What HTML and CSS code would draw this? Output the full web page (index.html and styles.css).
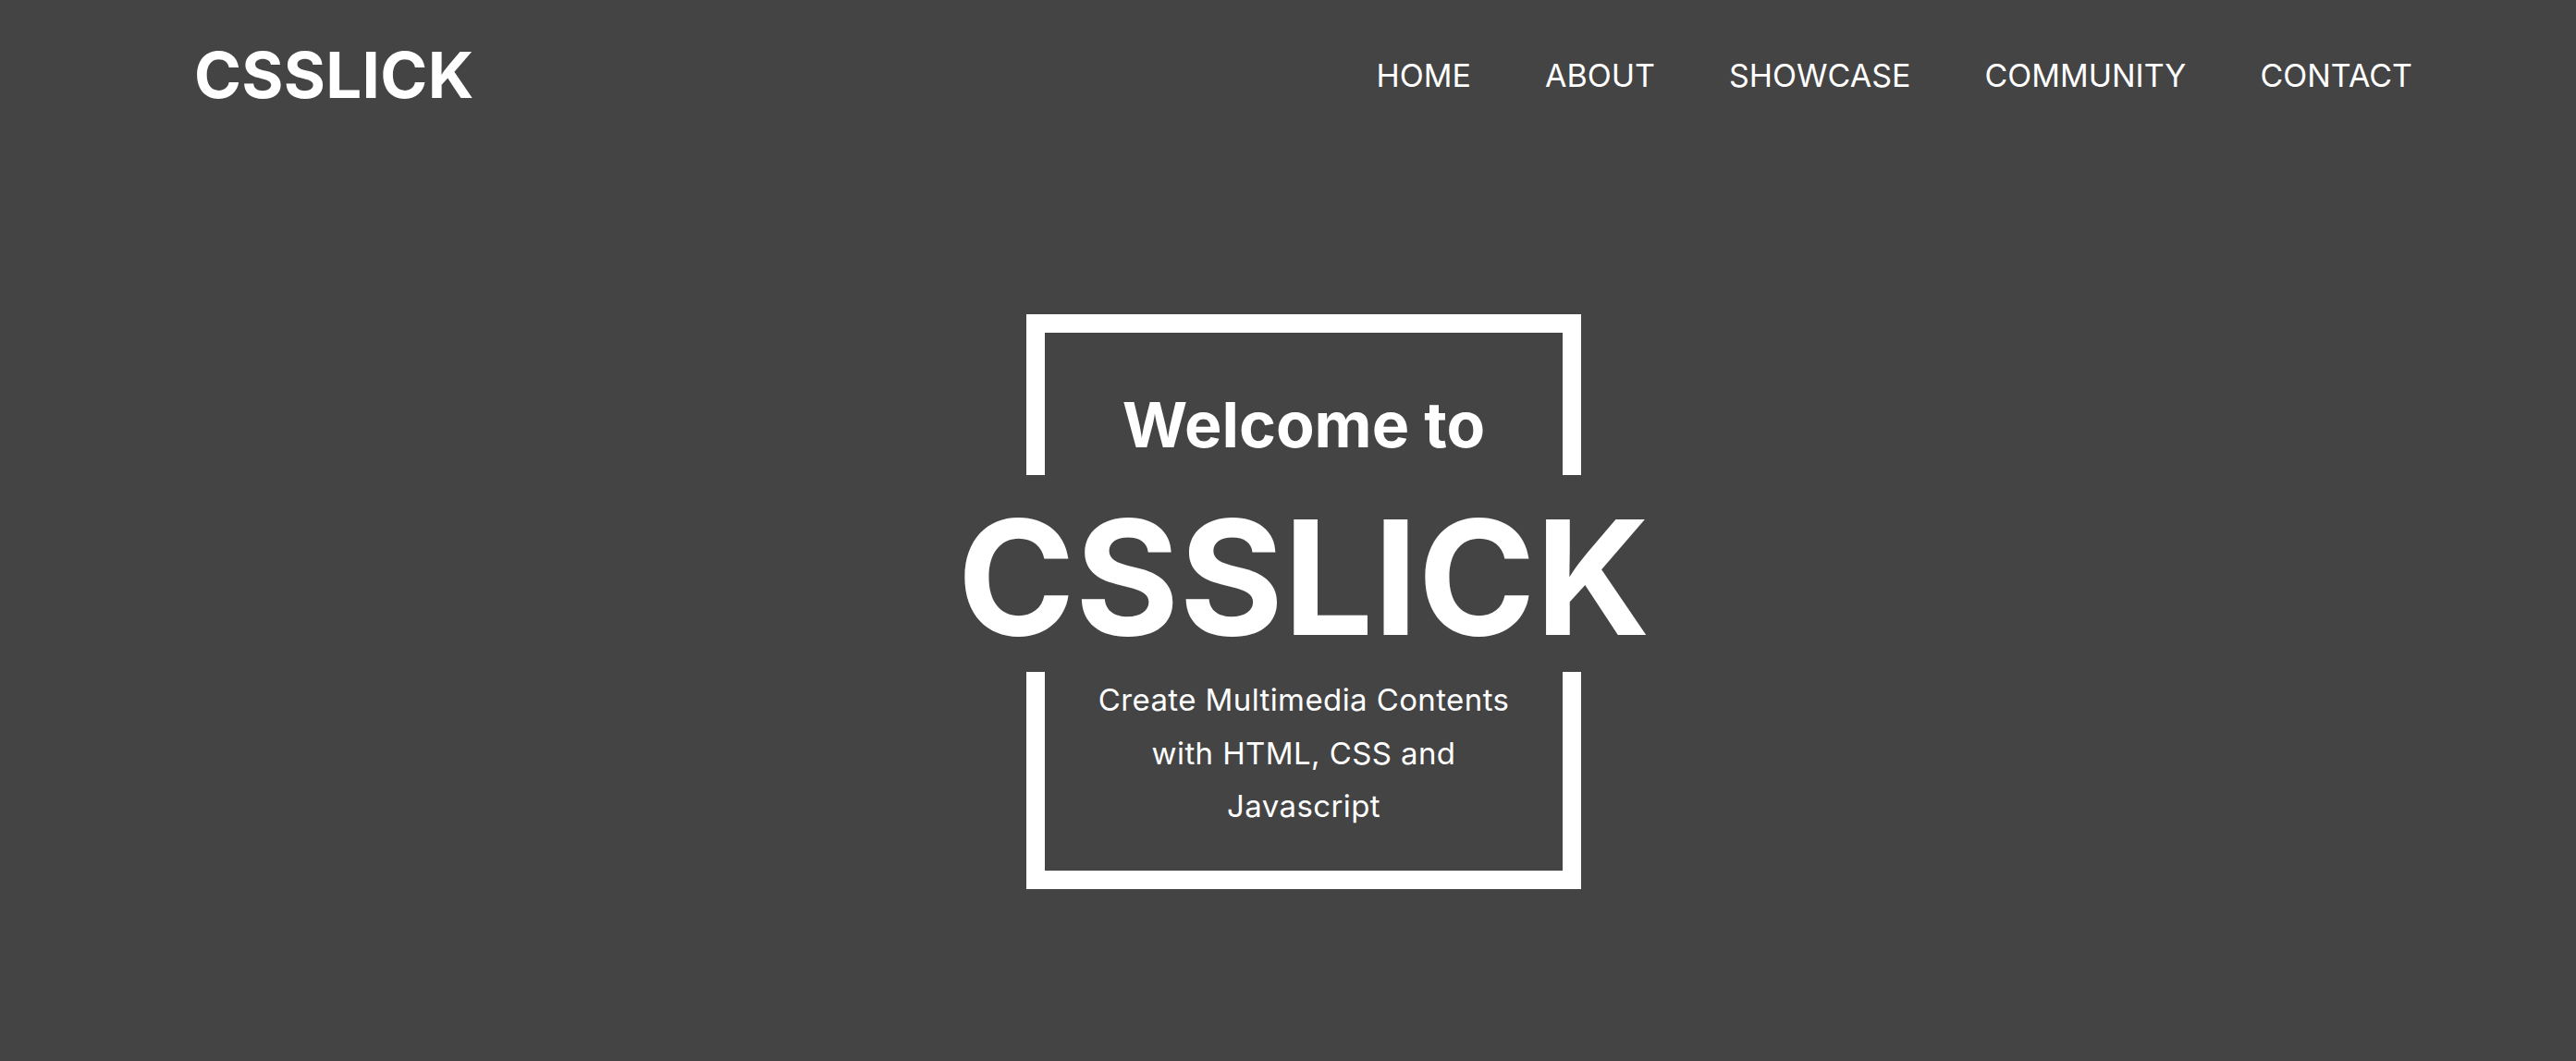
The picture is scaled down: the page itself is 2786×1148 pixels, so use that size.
FILE: index.html
```html
<!DOCTYPE html>
<html lang="en">
<head>
<meta charset="utf-8">
<title>CSSLICK</title>
<link rel="stylesheet" href="styles.css">
</head>
<body>
<header class="header">
  <a class="logo" href="#">CSSLICK</a>
  <nav class="nav">
    <a href="#">HOME</a>
    <a href="#">ABOUT</a>
    <a href="#">SHOWCASE</a>
    <a href="#">COMMUNITY</a>
    <a href="#">CONTACT</a>
  </nav>
</header>
<main class="hero">
  <div class="frame">
    <h2 class="welcome">Welcome to</h2>
    <h1 class="title">CSSLICK</h1>
    <p class="tagline">Create Multimedia Contents with HTML, CSS and Javascript</p>
  </div>
</main>
</body>
</html>
```
FILE: styles.css
```css
* { box-sizing: border-box; }
html, body { margin: 0; padding: 0; }
body {
  background: #444444;
  color: #ffffff;
  font-family: Inter, "Noto Sans", sans-serif;
  min-height: 100vh;
}
a { color: inherit; text-decoration: none; }

.header {
  display: flex;
  justify-content: space-between;
  align-items: center;
  height: 162px;
  padding: 0 177px 0 210px;
}
.logo {
  font-size: 69px;
  font-weight: 700;
  line-height: 1;
  letter-spacing: 0.3px;
}
.nav {
  display: flex;
  gap: 80px;
  font-size: 34px;
  font-weight: 400;
}

.hero {
  display: flex;
  justify-content: center;
  padding: 178px 0 0 34px;
}
.frame {
  width: 600px;
  border: 20px solid #ffffff;
  display: flex;
  flex-direction: column;
  align-items: center;
  padding: 58px 0 40px;
}
.welcome {
  margin: 0;
  font-size: 68px;
  font-weight: 700;
  line-height: normal;
}
.title {
  margin: 14px 0 0;
  font-size: 172px;
  font-weight: 700;
  line-height: 213px;
  white-space: nowrap;
  background: #444444;
  padding: 4px 10px 0;
  height: 213px;
}
.tagline {
  margin: 2px 0 0;
  max-width: 470px;
  font-size: 33px;
  letter-spacing: 0.4px;
  line-height: 57.6px;
  text-align: center;
}
```
